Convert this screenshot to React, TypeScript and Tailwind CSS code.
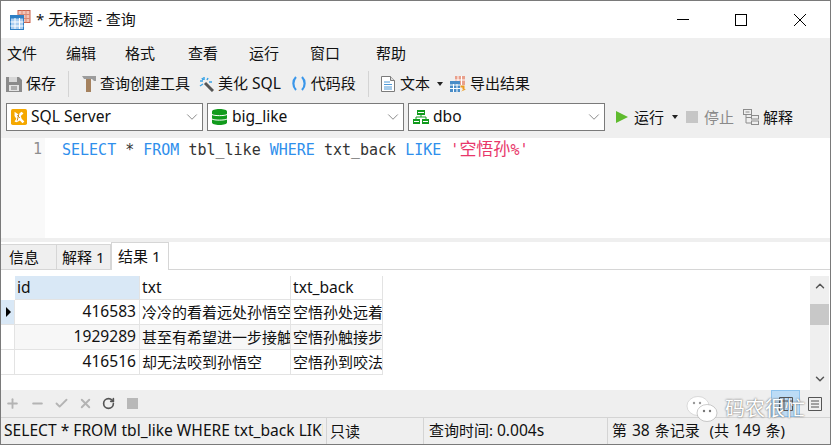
import { ChevronDown, ChevronUp, Minus, Plus, RotateCw, Check, X } from 'lucide-react';

const font = '[font-family:"Noto_Sans","Noto_Sans_CJK_SC",sans-serif]';

const AppIcon = () => (
  <svg width="21" height="20" viewBox="0 0 21 20" className="shrink-0">
    <rect x="8" y="0.5" width="12" height="12" fill="#f3c4b8" stroke="#c8604a" />
    <path d="M8 4.5h12M8 8.5h12M12 0.5v12M16 0.5v12" stroke="#d98a76" />
    <rect x="0.5" y="5.5" width="13" height="14" fill="#a9cdf0" stroke="#2f7fc4" />
    <rect x="0.5" y="5.5" width="13" height="3" fill="#2f7fc4" />
    <path d="M0.5 12h13M0.5 16h13M5 8v11M9.500 8v11" stroke="#fff" />
  </svg>
);

const SaveIcon = () => (
  <svg width="16" height="16" viewBox="0 0 16 16" className="shrink-0">
    <path d="M0 1h13l3 3v12H0z" fill="#8b8b8b" />
    <rect x="3" y="1" width="8" height="5" fill="#d8d8d8" />
    <rect x="3" y="9" width="10" height="6" fill="#e4e4e4" />
    <path d="M5 11h6M5 13h6" stroke="#777" />
  </svg>
);

const HammerIcon = () => (
  <svg width="14" height="16" viewBox="0 0 14 16" className="shrink-0">
    <path d="M0 0h14v5h-2L10 3H2z" fill="#9c9c9c" />
    <rect x="4" y="3" width="5" height="13" fill="#a5825f" />
  </svg>
);

const WandIcon = () => (
  <svg width="15" height="16" viewBox="0 0 15 16" className="shrink-0">
    <path d="M6 7l8 8" stroke="#555" strokeWidth="3" />
    <path d="M5 1v3M1 5h3M9 2l-1 2M1 10l3-2M10 6h3M3 2l1 2" stroke="#3ba4e6" strokeWidth="1.500" />
  </svg>
);

const BracesIcon = () => (
  <svg width="14" height="15" viewBox="0 0 14 15" fill="none" stroke="#3b97ea" strokeWidth="2.200" className="shrink-0">
    <path d="M4 1C0.500 4.500 0.500 10.500 4 14M10 1c3.500 3.500 3.500 9.500 0 13" />
  </svg>
);

const DocIcon = () => (
  <svg width="14" height="16" viewBox="0 0 14 16" className="shrink-0">
    <path d="M0.500 0.500h9l4 4v11h-13z" fill="#fff" stroke="#7b7b7b" />
    <path d="M9.500 0.500v4h4" fill="#ddd" stroke="#7b7b7b" />
    <path d="M3 6h6M3 8.500h8M3 11h8M3 13h8" stroke="#4f9ad8" />
  </svg>
);

const ExportIcon = () => (
  <svg width="16" height="16" viewBox="0 0 16 16" className="shrink-0">
    <rect x="5" y="0" width="10" height="9" fill="#e9a08c" />
    <path d="M8 0v9M11.500 0v9M5 4h10" stroke="#fff" />
    <rect x="0" y="5" width="10" height="11" fill="#4a8cc7" />
    <path d="M0 9h10M0 12.500h10M3.500 8v8M7 8v8" stroke="#fff" />
    <path d="M10.500 10.500h3v3" fill="none" stroke="#ee9a1e" strokeWidth="2" />
    <path d="M11 15.500l3-2.500 2 0.500" fill="#ee9a1e" />
  </svg>
);

const ServerIcon = () => (
  <svg width="16" height="16" viewBox="0 0 18 18" className="shrink-0">
    <rect width="18" height="18" rx="2" fill="#f5a800" />
    <path d="M4 3l4 3 4-3 2 2-3 3 1 3 3 3-2 2-3-3-2 1-2 1-2-1 2-3-2-3z" fill="#fff" />
    <path d="M7 7l3 3M9 5l-2 8" stroke="#c77f00" />
  </svg>
);

const DbIcon = () => (
  <svg width="15" height="16" viewBox="0 0 15 16" className="shrink-0 mr-px">
    <path d="M0 2.500C0 1 3 0 7.500 0S15 1 15 2.500v11C15 15 12 16 7.500 16S0 15 0 13.500z" fill="#119b1c" />
    <path d="M0 5.500c2 1.500 13 1.500 15 0M0 10c2 1.500 13 1.500 15 0" stroke="#fff" fill="none" />
  </svg>
);

const SchemaIcon = () => (
  <svg width="16" height="14" viewBox="0 0 16 14" className="shrink-0">
    <path d="M4 0h8v5H4zM0 9h7v5H0zM9 9h7v5H9z" fill="#119b1c" />
    <path d="M8 5v2M3 9V7h10v2" stroke="#119b1c" fill="none" />
    <path d="M5 2.500h6M1 11.500h5M10 11.500h5" stroke="#fff" />
  </svg>
);

const ExplainIcon = () => (
  <svg width="16" height="16" viewBox="0 0 16 16" className="shrink-0" fill="none" stroke="#8c8c8c">
    <rect x="0.500" y="0.500" width="8" height="5" />
    <rect x="8.500" y="6.500" width="7" height="3.500" />
    <rect x="8.500" y="12" width="7" height="3.500" />
    <path d="M3 5.500v8.500h5.500M3 8.500h5.500M2.500 3h4" />
  </svg>
);

const ToolItem = ({ icon, children, className }: { icon: React.ReactNode; children: React.ReactNode; className?: string }) => (
  <div className={`flex items-center gap-[4px] ${className ?? ''}`}>
    {icon}
    <span>{children}</span>
  </div>
);

const Sep = () => <div className="w-px h-[26px] bg-[#d4d4d4] mx-[12px]" />;

const Caret = () => (
  <div className="w-0 h-0 border-x-[3px] border-x-transparent border-t-[4px] border-t-[#222]" />
);

const Select = ({ icon, label }: { icon: React.ReactNode; label: string }) => (
  <div className="w-[197px] h-[28px] bg-white border border-[#7a7a7a] flex items-center pl-[4px] pr-[1px]">
    {icon}
    <span className="ml-[4px] flex-1 text-[15.6px] text-[#111]">{label}</span>
    <ChevronDown size={18} strokeWidth={1} className="text-[#666]" />
  </div>
);

const menus = [
  { label: '文件', cls: 'ml-0' },
  { label: '编辑', cls: 'ml-[29px]' },
  { label: '格式', cls: 'ml-[29px]' },
  { label: '查看', cls: 'ml-[33px]' },
  { label: '运行', cls: 'ml-[31px]' },
  { label: '窗口', cls: 'ml-[31px]' },
  { label: '帮助', cls: 'ml-[36px]' },
];

const rows = [
  { id: '416583', txt: '冷冷的看着远处孙悟空', back: '空悟孙处远着', bg: 'bg-white', marker: true },
  { id: '1929289', txt: '甚至有希望进一步接触', back: '空悟孙触接步', bg: 'bg-[#f7f7f7]', marker: false },
  { id: '416516', txt: '却无法咬到孙悟空', back: '空悟孙到咬法', bg: 'bg-white', marker: false },
];

const cell = 'h-full border-r border-b border-[#e3e3e3] overflow-hidden whitespace-nowrap flex items-center';

export default function App() {
  return (
    <div className={`w-[831px] h-[445px] overflow-hidden flex flex-col bg-[#efefef] border border-[#7a7a7a] text-[15px] leading-none text-[#111] ${font}`}>
      {/* Title bar */}
      <div className="h-[37px] shrink-0 bg-white flex items-center pl-[9px]">
        <AppIcon />
        <span className="ml-[5px] flex-1">* 无标题 - 查询</span>
        <div className="flex items-center mr-[24px]">
          <div className="w-[12px] h-px bg-black" />
          <div className="w-[12px] h-[12px] border border-black ml-[46px]" />
          <svg width="12" height="12" viewBox="0 0 12 12" stroke="#000" className="ml-[47px]">
            <path d="M0 0l12 12M12 0L0 12" />
          </svg>
        </div>
      </div>

      {/* Menu */}
      <div className="h-[31px] shrink-0 flex items-center pl-[6px]">
        {menus.map((m) => (
          <span key={m.label} className={m.cls}>{m.label}</span>
        ))}
      </div>

      {/* Toolbar */}
      <div className="h-[29px] shrink-0 flex items-center pl-[5px]">
        <ToolItem icon={<SaveIcon />}>保存</ToolItem>
        <Sep />
        <ToolItem icon={<HammerIcon />} className="ml-[1px]">查询创建工具</ToolItem>
        <ToolItem icon={<WandIcon />} className="ml-[9px]">
          美化 <span className="text-[15.6px]">SQL</span>
        </ToolItem>
        <div className="flex items-center ml-[11px] gap-[5px]">
          <BracesIcon />
          <span>代码段</span>
        </div>
        <Sep />
        <ToolItem icon={<DocIcon />} className="gap-[5px]">文本</ToolItem>
        <div className="ml-[7px] mr-[7px]"><Caret /></div>
        <ToolItem icon={<ExportIcon />} className="gap-[3px]">导出结果</ToolItem>
      </div>

      {/* Connection selects */}
      <div className="h-[40px] shrink-0 flex items-center pl-[5px] pb-[2px] gap-[4px]">
        <Select icon={<ServerIcon />} label="SQL Server" />
        <Select icon={<DbIcon />} label="big_like" />
        <Select icon={<SchemaIcon />} label="dbo" />
        <div className="flex items-center ml-[7px]">
          <div className="w-0 h-0 border-y-[6.500px] border-y-transparent border-l-[12px] border-l-[#5fbb2e]" />
          <span className="ml-[6px]">运行</span>
          <div className="ml-[8px]"><Caret /></div>
          <div className="ml-[8px] w-[12px] h-[12px] bg-[#c6c6c6]" />
          <span className="ml-[6px] text-[#8a8a8a]">停止</span>
          <div className="ml-[9px]"><ExplainIcon /></div>
          <span className="ml-[4px]">解释</span>
        </div>
      </div>

      {/* Editor */}
      <div className="h-[100px] shrink-0 bg-white flex">
        <div className="w-[44px] bg-[#f9f9f9] text-right pr-[3px] pt-[2px] text-[#8f8f8f] font-['DejaVu_Sans_Mono',monospace] text-[15px] leading-[18px]">1</div>
        <div className="pl-[17px] pt-[2px] font-['DejaVu_Sans_Mono','Noto_Sans_CJK_SC',monospace] text-[15px] leading-[18px] whitespace-pre text-[#333]">
          <span className="text-[#2f8fec]">SELECT</span> * <span className="text-[#2f8fec]">FROM</span> tbl_like <span className="text-[#2f8fec]">WHERE</span> txt_back <span className="text-[#2f8fec]">LIKE</span> <span className="text-[#e8366a]">'<span className="text-[17px]">空悟孙</span>%'</span>
        </div>
      </div>

      {/* Tabs */}
      <div className="h-[32px] shrink-0 bg-white border-t-[4px] border-t-[#efefef] flex items-end relative">
        <div className="absolute left-0 right-0 bottom-0 h-px bg-[#d6d6d6]" />
        <div className="h-[26px] w-[56px] bg-[#efefef] border border-[#d6d6d6] border-l-0 flex items-center pl-[8px] relative">信息</div>
        <div className="h-[26px] w-[54px] bg-[#efefef] border-y border-r border-[#d6d6d6] flex items-center pl-[5px] relative">解释 1</div>
        <div className="h-[28px] w-[58px] bg-white border-x border-t border-[#d6d6d6] flex items-center pl-[6px] relative">结果 1</div>
      </div>

      {/* Result grid */}
      <div className="h-[120px] shrink-0 bg-white flex">
        <div className="flex-1 pt-[6px]">
          <div className="flex h-[24px] text-[15.6px]">
            <div className="w-[14px] h-full bg-white" />
            <div className={`${cell} w-[125px] bg-[#d9e8f6] pl-[2px]`}>id</div>
            <div className={`${cell} w-[151px] pl-[2px]`}>txt</div>
            <div className={`${cell} w-[92px] pl-[2px]`}>txt_back</div>
          </div>
          {rows.map((r) => (
            <div key={r.id} className="flex h-[25px]">
              <div className={`w-[14px] h-full border-r border-b border-[#e3e3e3] flex items-center pl-[5px] ${r.marker ? 'bg-[#d9e8f6]' : 'bg-white'}`}>
                {r.marker && <div className="w-0 h-0 border-y-[5px] border-y-transparent border-l-[5px] border-l-black" />}
              </div>
              <div className={`${cell} w-[125px] justify-end pr-[3px] text-[15.6px] ${r.bg}`}>{r.id}</div>
              <div className={`${cell} w-[151px] pl-[2px] ${r.bg}`}>{r.txt}</div>
              <div className={`${cell} w-[92px] pl-[2px] ${r.bg}`}>{r.back}</div>
            </div>
          ))}
        </div>
        <div className="w-[19px] mt-[6px] mr-px bg-[#efefef] flex flex-col items-center text-[#555]">
          <ChevronUp size={14} strokeWidth={2.500} className="mt-[3px]" />
          <div className="w-full h-[21px] bg-[#c8c8c8] mt-[11px]" />
          <ChevronDown size={14} strokeWidth={2.500} className="mt-auto mb-[4px]" />
        </div>
      </div>

      {/* Record bar */}
      <div className="h-[27px] shrink-0 flex items-center pl-[4px] text-[#b4b4b4]">
        <Plus size={15} strokeWidth={3} />
        <Minus size={15} strokeWidth={3} className="ml-[10px]" />
        <Check size={15} strokeWidth={3} className="ml-[9px]" />
        <X size={15} strokeWidth={3} className="ml-[9px]" />
        <RotateCw size={13} strokeWidth={3} className="ml-[9px] text-[#555]" />
        <div className="w-[11px] h-[11px] bg-[#b8b8b8] ml-[12px]" />
        <div className="ml-auto mr-px flex items-center">
          <div className="w-[29px] h-[27px] bg-[#bcdcf6] border border-[#8fc4ee] flex items-center justify-center">
            <svg width="14" height="14" viewBox="0 0 14 14" fill="none" stroke="#555"><path d="M0.500 0.500h13v13h-13zM5 0.500v13M9.500 0.500v13M0.500 4h13" /></svg>
          </div>
          <div className="w-[29px] flex justify-center">
            <svg width="14" height="14" viewBox="0 0 14 14" fill="none" stroke="#555"><path d="M0.500 0.500h13v13h-13zM3 4h8M3 7h8M3 10h8" /></svg>
          </div>
        </div>
      </div>

      {/* Status bar */}
      <div className="flex-1 border-t border-[#d4d4d4] flex items-center">
        <div className="w-[326px] h-full flex items-center pl-[3px] border-r border-[#d4d4d4] overflow-hidden whitespace-nowrap">
          <span className="w-[319px] overflow-hidden text-[15.6px]">SELECT * FROM tbl_like WHERE txt_back LIKE '空悟孙%'</span>
        </div>
        <div className="w-[97px] h-full flex items-center pl-[3px] border-r border-[#d4d4d4]">只读</div>
        <div className="w-[184px] h-full flex items-center pl-[5px] border-r border-[#d4d4d4] whitespace-pre">
          <span>查询时间: <span className="text-[15.6px]">0.004s</span></span>
        </div>
        <div className="pl-[4px] whitespace-pre [word-spacing:1px]">第 <span className="text-[15.6px]">38</span> 条记录  (共 <span className="text-[15.6px]">149</span> 条)</div>
      </div>

      {/* Watermark */}
      <div className="absolute left-[686px] top-[395px] flex items-center gap-[7px] text-white [text-shadow:0_0_2px_#444]">
        <svg width="32" height="28" viewBox="0 0 32 28">
          <ellipse cx="12" cy="11" rx="11" ry="9.500" fill="#fff" stroke="#bbb" strokeWidth="0.500" />
          <ellipse cx="21" cy="18" rx="10" ry="8.500" fill="#fff" stroke="#999" strokeWidth="0.500" />
          <circle cx="8" cy="8" r="1.200" fill="#999" /><circle cx="14" cy="8" r="1.200" fill="#999" />
          <circle cx="18" cy="16" r="1.200" fill="#777" /><circle cx="24" cy="16" r="1.200" fill="#777" />
        </svg>
        <span className="text-[20px]">码农很忙</span>
      </div>
    </div>
  );
}
